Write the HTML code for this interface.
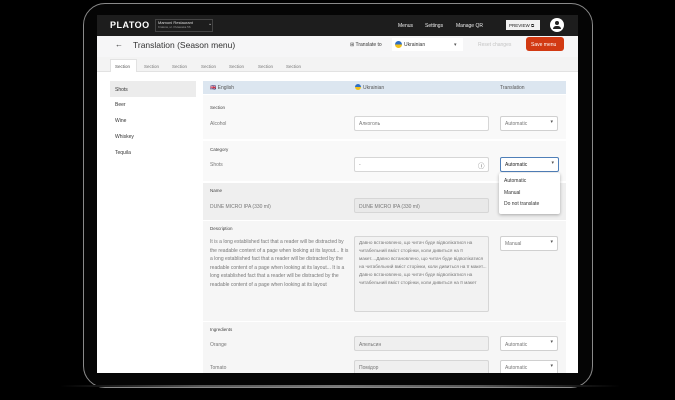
<!DOCTYPE html>
<html><head><meta charset="utf-8"><style>
*{margin:0;padding:0;box-sizing:border-box}
body{width:675px;height:400px;background:#000;position:relative;overflow:hidden;font-family:"Liberation Sans",sans-serif;color:#333}
.a{position:absolute}
.t{position:absolute;font-size:5px;white-space:nowrap;color:#555}
.frame{left:83px;top:3px;width:510px;height:385px;border:1.5px solid #8a8a8a;border-radius:22px;background:#050505}
.screen{left:97px;top:15px;width:481px;height:358px;background:#fff;overflow:hidden}
.inp{position:absolute;background:#f6f6f6;border:0.7px solid #d6d6d6;border-radius:2px}
.sel{position:absolute;background:#fff;border:0.7px solid #d0d0d0;border-radius:2px}
.sel:after{content:"▾";position:absolute;right:4px;top:2px;font-size:5px;color:#555}
</style></head><body>
<div class="a frame"></div>
<div class="a" style="left:60px;top:385px;width:560px;height:2px;background:linear-gradient(90deg,#000,#555,#777,#555,#000)"></div>
<div class="a screen">
 <div class="a" style="left:0;top:0;width:481px;height:21px;background:#1d1d1d"></div>
 <div class="t" style="left:13px;top:5px;font-size:9px;font-weight:bold;color:#fff;letter-spacing:.5px">PLATOO</div>
 <div class="a" style="left:58px;top:4px;width:58px;height:13px;border:0.6px solid #444"></div>
 <div class="t" style="left:61px;top:5px;font-size:4px;color:#ddd">Mamoni Restaurant</div>
 <div class="t" style="left:61px;top:10px;font-size:3px;color:#999">Kraków, ul. Puławska 56</div>
 <div class="t" style="left:111px;top:6px;color:#ccc">⌄</div>
 <div class="t" style="left:301px;top:8px;color:#eee">Menus</div>
 <div class="t" style="left:328px;top:8px;color:#eee">Settings</div>
 <div class="t" style="left:359px;top:8px;color:#eee">Manage QR</div>
 <div class="a" style="left:409px;top:5px;width:34px;height:10px;background:#f2f2f2"></div>
 <div class="t" style="left:412px;top:8px;font-size:4.5px;color:#222">PREVIEW ⧉</div>
 <div class="a" style="left:453px;top:3px;width:14px;height:14px;border-radius:50%;background:#fff"></div>
 <div class="a" style="left:458px;top:6px;width:4px;height:4px;border-radius:50%;background:#222"></div>
 <div class="a" style="left:456px;top:11px;width:8px;height:3px;border-radius:3px 3px 0 0;background:#222"></div>
 <div class="a" style="left:0;top:21px;width:481px;height:21px;background:#f6f6f7"></div>
 <div class="t" style="left:18px;top:25px;font-size:8px;color:#333">←</div>
 <div class="t" style="left:36px;top:25px;font-size:8.5px;color:#333">Translation (Season menu)</div>
 <div class="t" style="left:253px;top:27px;color:#333">⊞ Translate to</div>
 <div class="a" style="left:295px;top:23px;width:71px;height:13px;background:#fff"></div>
 <div class="a" style="left:298px;top:26px;width:7px;height:7px;border-radius:50%;background:linear-gradient(#2f6fc4 50%,#f2c018 50%)"></div>
 <div class="t" style="left:307px;top:27px;color:#333">Ukrainian</div>
 <div class="t" style="left:357px;top:27px;color:#555">▾</div>
 <div class="t" style="left:381px;top:27px;color:#c4c4c4">Reset changes</div>
 <div class="a" style="left:429px;top:22px;width:38px;height:14px;border-radius:3px;background:#d23a13"></div>
 <div class="t" style="left:434px;top:27px;color:#fff">Save menu</div>
 <div class="a" style="left:0;top:42px;width:481px;height:15px;background:#f3f3f3;border-bottom:0.6px solid #e2e2e2"></div>
 <div class="a" style="left:13px;top:44px;width:27px;height:13px;background:#fff;border:0.6px solid #e2e2e2;border-bottom:none"></div>
 <div class="t" style="left:18px;top:49px;font-size:4.5px">Section</div>
 <div class="t" style="left:47px;top:49px;font-size:4.5px;color:#777">Section</div>
 <div class="t" style="left:75px;top:49px;font-size:4.5px;color:#777">Section</div>
 <div class="t" style="left:104px;top:49px;font-size:4.5px;color:#777">Section</div>
 <div class="t" style="left:132px;top:49px;font-size:4.5px;color:#777">Section</div>
 <div class="t" style="left:161px;top:49px;font-size:4.5px;color:#777">Section</div>
 <div class="t" style="left:189px;top:49px;font-size:4.5px;color:#777">Section</div>
 <div class="a" style="left:13px;top:66px;width:86px;height:16px;background:#ececec"></div>
 <div class="t" style="left:18px;top:72px;color:#333">Shots</div>
 <div class="t" style="left:18px;top:87px;color:#333">Beer</div>
 <div class="t" style="left:18px;top:103px;color:#333">Wine</div>
 <div class="t" style="left:18px;top:119px;color:#333">Whiskey</div>
 <div class="t" style="left:18px;top:135px;color:#333">Tequila</div>
 <!-- main table -->
 <div class="a" style="left:106px;top:66px;width:363px;height:13px;background:#dce6f0"></div>
 <div class="t" style="left:113px;top:70px">🇬🇧 English</div>
 <div class="a" style="left:258px;top:69px;width:6px;height:6px;border-radius:50%;background:linear-gradient(#2f6fc4 50%,#f2c018 50%)"></div>
 <div class="t" style="left:266px;top:70px">Ukrainian</div>
 <div class="t" style="left:403px;top:70px">Translation</div>
 <div class="a" style="left:106px;top:80px;width:363px;height:44px;background:#f9f9f9"></div>
 <div class="t" style="left:113px;top:90px;font-size:4.5px;color:#444">Section</div>
 <div class="t" style="left:113px;top:106px;color:#777">Alcohol</div>
 <div class="inp" style="left:257px;top:101px;width:135px;height:15px;background:#fff"></div>
 <div class="t" style="left:262px;top:106px;color:#777">Алкоголь</div>
 <div class="sel" style="left:403px;top:101px;width:58px;height:15px"></div>
 <div class="t" style="left:408px;top:106px;color:#777">Automatic</div>
 <div class="a" style="left:106px;top:126px;width:363px;height:40px;background:#f9f9f9"></div>
 <div class="t" style="left:113px;top:132px;font-size:4.5px;color:#444">Category</div>
 <div class="t" style="left:113px;top:147px;color:#777">Shots</div>
 <div class="inp" style="left:257px;top:142px;width:135px;height:15px;background:#fff"></div>
 <div class="t" style="left:262px;top:147px;color:#777">-</div>
 <div class="t" style="left:381px;top:145px;font-size:6.5px;color:#666">ⓘ</div>
 <div class="sel" style="left:403px;top:142px;width:59px;height:15px;border-color:#4f7fb8"></div>
 <div class="t" style="left:408px;top:147px;color:#222">Automatic</div>
 <div class="a" style="left:106px;top:168px;width:363px;height:37px;background:#efefef"></div>
 <div class="t" style="left:113px;top:173px;font-size:4.5px;color:#444">Name</div>
 <div class="t" style="left:113px;top:189px;color:#777">DUNE MICRO IPA (330 ml)</div>
 <div class="inp" style="left:257px;top:183px;width:135px;height:15px;background:#e9e9e9"></div>
 <div class="t" style="left:262px;top:189px;color:#777">DUNE MICRO IPA (330 ml)</div>
 <div class="a" style="left:106px;top:206px;width:363px;height:100px;background:#f6f6f6"></div>
 <div class="t" style="left:113px;top:211px;font-size:4.5px;color:#444">Description</div>
 <div class="t" style="left:113px;top:223px;line-height:8.5px;color:#777;white-space:normal;width:140px">It is a long established fact that a reader will be distracted by the readable content of a page when looking at its layout... It is a long established fact that a reader will be distracted by the readable content of a page when looking at its layout... It is a long established fact that a reader will be distracted by the readable content of a page when looking at its layout</div>
 <div class="inp" style="left:257px;top:221px;width:135px;height:76px;background:#f2f2f2"></div>
 <div class="t" style="left:262px;top:224px;line-height:8px;color:#777;white-space:normal;width:128px;font-size:4.7px">Давно встановлено, що читач буде відволікатися на читабельний вміст сторінки, коли дивиться на її макет....Давно встановлено, що читач буде відволікатися на читабельний вміст сторінки, коли дивиться на її макет... Давно встановлено, що читач буде відволікатися на читабельний вміст сторінки, коли дивиться на її макет</div>
 <div class="sel" style="left:403px;top:221px;width:58px;height:15px"></div>
 <div class="t" style="left:408px;top:226px;color:#777">Manual</div>
 <div class="a" style="left:106px;top:307px;width:363px;height:51px;background:#f6f6f6"></div>
 <div class="t" style="left:113px;top:312px;font-size:4.5px;color:#444">Ingredients</div>
 <div class="t" style="left:113px;top:327px;color:#777">Orange</div>
 <div class="inp" style="left:257px;top:321px;width:135px;height:15px;background:#efefef"></div>
 <div class="t" style="left:262px;top:327px;color:#777">Апельсин</div>
 <div class="sel" style="left:403px;top:321px;width:58px;height:15px"></div>
 <div class="t" style="left:408px;top:327px;color:#777">Automatic</div>
 <div class="t" style="left:113px;top:350px;color:#777">Tomato</div>
 <div class="inp" style="left:257px;top:345px;width:135px;height:15px;background:#efefef"></div>
 <div class="t" style="left:262px;top:350px;color:#777">Помідор</div>
 <div class="sel" style="left:403px;top:345px;width:58px;height:15px"></div>
 <div class="t" style="left:408px;top:350px;color:#777">Automatic</div>
 <!-- dropdown -->
 <div class="a" style="left:402px;top:158px;width:61px;height:41px;background:#fff;box-shadow:0 1px 3px rgba(0,0,0,.3);border-radius:2px"></div>
 <div class="t" style="left:407px;top:163px;color:#333">Automatic</div>
 <div class="t" style="left:407px;top:175px;color:#333">Manual</div>
 <div class="t" style="left:407px;top:186px;color:#333">Do not translate</div>
</div>
</body></html>
